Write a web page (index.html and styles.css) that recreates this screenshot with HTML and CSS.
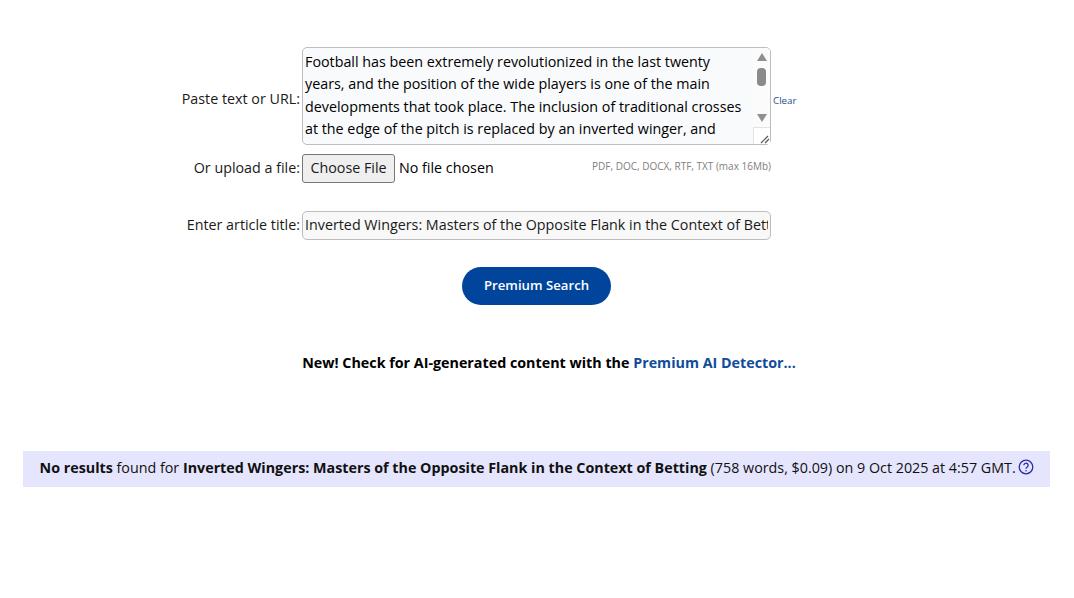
FILE: index.html
```html
<!DOCTYPE html>
<html lang="en">
<head>
<meta charset="utf-8">
<title>Premium Search</title>
<link rel="stylesheet" href="styles.css">
</head>
<body>
<form class="search-form">
  <label class="field-label paste-label" for="text">Paste text or URL:</label>
  <div class="textarea-wrap">
    <textarea class="text-input" id="text" readonly>Football has been extremely revolutionized in the last twenty years, and the position of the wide players is one of the main developments that took place. The inclusion of traditional crosses at the edge of the pitch is replaced by an inverted winger, and consequently attacking football has changed.</textarea>
    <div class="scrollbar">
      <span class="arrow-up"></span>
      <span class="thumb"></span>
      <span class="arrow-down"></span>
    </div>
    <div class="resizer">
      <svg width="10" height="10" viewBox="0 0 10 10"><path d="M1 9 8 2M5 9 9 5" stroke="#555" stroke-width="1.2" fill="none"/></svg>
    </div>
  </div>
  <a class="clear-link" href="#">Clear</a>

  <label class="field-label" for="file">Or upload a file:</label>
  <div class="file-row">
    <input class="file-input" id="file" type="file">
    <span class="file-hint">PDF, DOC, DOCX, RTF, TXT (max 16Mb)</span>
  </div>
  <span></span>

  <label class="field-label title-label" for="title">Enter article title:</label>
  <input class="title-input" id="title" type="text" value="Inverted Wingers: Masters of the Opposite Flank in the Context of Betting">
  <span></span>
</form>

<div class="action-row">
  <button class="search-button" type="button">Premium Search</button>
</div>

<p class="promo">New! Check for AI-generated content with the <a class="promo-link" href="#">Premium AI Detector...</a></p>

<div class="results">
  <b>No results</b> found for <b>Inverted Wingers: Masters of the Opposite Flank in the Context of Betting</b> (758 words, $0.09) on 9 Oct 2025 at 4:57 GMT.
  <svg class="help-icon" width="16" height="16" viewBox="0 0 16 16"><circle cx="8" cy="8" r="6.8" fill="none" stroke="#2b2ba8" stroke-width="1.3"/><path d="M5.9 6.3a2.1 2.1 0 1 1 3.3 1.7c-.8.5-1.2.9-1.2 1.7" fill="none" stroke="#2b2ba8" stroke-width="1.3"/><circle cx="8" cy="11.7" r=".8" fill="#2b2ba8"/></svg>
</div>
</body>
</html>
```

FILE: styles.css
```css
html, body {
  margin: 0;
  padding: 0;
  background: #fff;
}

body {
  font-family: "Open Sans", sans-serif;
  font-size: 14.3px;
  color: #000;
  height: 598px;
  overflow: hidden;
}

.search-form {
  display: grid;
  grid-template-columns: 300px 469px 1fr;
  column-gap: 2px;
  align-items: center;
  padding-top: 47px;
  row-gap: 9px;
}

.field-label {
  text-align: right;
  color: #1a1a1a;
  padding-bottom: 2px;
}

.paste-label {
  padding: 5px 0 0;
}

.title-label {
  margin-top: 19px;
}

.textarea-wrap {
  position: relative;
  height: 98px;
}

.text-input {
  display: block;
  box-sizing: border-box;
  width: 100%;
  height: 100%;
  margin: 0;
  padding: 2.6px 20px 3px 2px;
  border: 1px solid #bdbdbd;
  border-radius: 5px;
  background: #f8fafc;
  font: 14.3px/22.5px "Open Sans", sans-serif;
  color: #000;
  resize: none;
  overflow: hidden;
  outline: none;
}

.scrollbar {
  position: absolute;
  top: 1px;
  right: 1px;
  box-sizing: border-box;
  width: 17px;
  height: 79px;
  padding-bottom: 5px;
  background: #fbfbfb;
  border-top-right-radius: 4px;
  display: flex;
  flex-direction: column;
  align-items: center;
}

.arrow-up {
  margin-top: 5px;
  border-left: 5.5px solid transparent;
  border-right: 5.5px solid transparent;
  border-bottom: 8px solid #8f8f8f;
}

.thumb {
  margin-top: 7px;
  width: 9px;
  height: 18px;
  border-radius: 4px;
  background: #8a8a8a;
}

.arrow-down {
  margin-top: auto;
  border-left: 5.5px solid transparent;
  border-right: 5.5px solid transparent;
  border-top: 8px solid #8f8f8f;
}

.resizer {
  position: absolute;
  right: 1px;
  bottom: 1px;
  width: 17px;
  height: 17px;
  background: #fff;
  border-top: 1px solid #e2e2e2;
  border-left: 1px solid #e2e2e2;
  box-sizing: border-box;
  display: flex;
  align-items: flex-end;
  justify-content: flex-end;
}

.clear-link {
  padding-top: 8px;
  font-size: 9.75px;
  color: #1a4f8a;
  text-decoration: none;
}

.file-row {
  display: flex;
  align-items: center;
  justify-content: space-between;
  height: 29px;
}

.file-input {
  font: 14.3px "Open Sans", sans-serif;
  width: 230px;
}

.file-input::file-selector-button {
  box-sizing: border-box;
  width: 93px;
  height: 29px;
  margin-right: 4px;
  padding: 0 0 2px;
  font: inherit;
  color: #1a1a1a;
  background: #efefef;
  border: 1px solid #767676;
  border-radius: 3px;
}

.file-hint {
  padding-bottom: 5px;
  font-size: 10px;
  color: #808080;
}

.title-input {
  box-sizing: border-box;
  width: 100%;
  height: 29px;
  margin-top: 19px;
  padding: 0 2px 2px;
  border: 1px solid #bdbdbd;
  border-radius: 5px;
  background: #f8f8f8;
  font: 14.3px "Open Sans", sans-serif;
  color: #1a1a1a;
  outline: none;
}

.action-row {
  display: flex;
  justify-content: center;
  margin-top: 27px;
  padding-right: 1px;
}

.search-button {
  width: 149px;
  height: 38px;
  padding: 0 0 2px;
  border: 0;
  border-radius: 19px;
  background: #00449c;
  color: #fff;
  font: 600 13.2px "Open Sans", sans-serif;
}

.promo {
  margin: 48px 0 0;
  padding-left: 24px;
  text-align: center;
  font-weight: 700;
  line-height: 20px;
}

.promo-link {
  color: #0f4c9a;
  text-decoration: none;
}

.results {
  margin: 78px 24px 0 23px;
  padding-left: 1px;
  height: 36px;
  line-height: 34px;
  background: #e5e5fd;
  text-align: center;
  color: #111;
}

.help-icon {
  margin-left: -1px;
  vertical-align: -2px;
}
```
